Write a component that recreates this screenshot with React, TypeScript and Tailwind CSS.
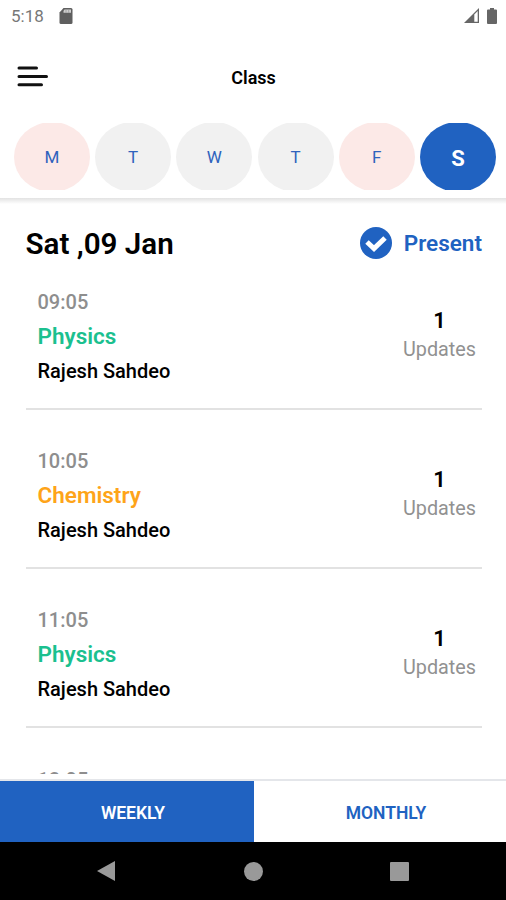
const days = [
  { label: "M", tone: "bg-[#fce9e7] text-[#2f62bd] text-[17px]" },
  { label: "T", tone: "bg-[#f1f1f1] text-[#2f62bd] text-[17px]" },
  { label: "W", tone: "bg-[#f1f1f1] text-[#2f62bd] text-[17px]" },
  { label: "T", tone: "bg-[#f1f1f1] text-[#2f62bd] text-[17px]" },
  { label: "F", tone: "bg-[#fce9e7] text-[#2f62bd] text-[17px]" },
  { label: "S", tone: "bg-[#2062c1] text-white text-[22px] font-bold" },
];

const lessons = [
  { time: "09:05", subject: "Physics", tone: "text-[#1bc08f]" },
  { time: "10:05", subject: "Chemistry", tone: "text-[#fea419]" },
  { time: "11:05", subject: "Physics", tone: "text-[#1bc08f]" },
];

function StatusBar() {
  return (
    <div className="flex h-8 shrink-0 items-center pl-[11px] pr-[9px] text-[#666]">
      <span className="w-[48px] text-[17px] leading-8 text-[#777]">5:18</span>
      <svg width="14" height="16" viewBox="0 0 14 16" className="mt-[-1px]">
        <path d="M4.500 0h7.500a1.500 1.500 0 0 1 1.500 1.500v13a1.500 1.500 0 0 1-1.500 1.500H2A1.500 1.500 0 0 1 .5 14.500V4.500z" fill="#5f5f5f" />
        <path d="M5.500 1.500h6.500v3.300H4.500V3z" fill="#d0d0d0" />
        <path d="M7 1.500v3.300M9.700 1.500v3.300" stroke="#999" strokeWidth=".8" />
      </svg>
      <svg width="15" height="15" viewBox="0 0 15 15" className="ml-auto mt-[-1px]">
        <path d="M0 15 15 0v15z" fill="#666" />
        <path d="M10.300 6.500 13.700 3v10.700h-3.400z" fill="#fff" />
      </svg>
      <svg width="10" height="16" viewBox="0 0 10 16" className="ml-[8px] mt-[-1px]">
        <path d="M3 0h4v1.500h2a1 1 0 0 1 1 1V15a1 1 0 0 1-1 1H1a1 1 0 0 1-1-1V2.500a1 1 0 0 1 1-1h2z" fill="#666" />
      </svg>
    </div>
  );
}

export default function App() {
  return (
    <div className="flex h-[900px] w-[506px] flex-col overflow-hidden bg-white font-['Roboto',sans-serif] text-black">
      <StatusBar />
      <header className="grid h-[91px] shrink-0 grid-cols-[1fr_auto_1fr] items-center pl-[17px] pr-[16px]">
        <svg width="32" height="22" viewBox="0 0 32 22" className="mt-[-2px]" stroke="#111" strokeWidth="3" strokeLinecap="round">
          <path d="M2 2h17.500M2 10.500h27.500M2 18.700h22.500" />
        </svg>
        <h1 className="text-[18px] font-semibold leading-6">Class</h1>
      </header>
      <nav className="flex h-[75px] shrink-0 gap-[5.200px] pl-[14px]">
        {days.map((d, i) => (
          <button key={i} className="flex h-[67px] w-[76px] shrink-0 items-center overflow-hidden">
            <span className={`flex h-[70px] w-[76px] shrink-0 items-center justify-center rounded-[50%] pt-[3px] ${d.tone}`}>
              {d.label}
            </span>
          </button>
        ))}
      </nav>
      <div className="h-[6px] shrink-0 bg-linear-to-b from-[#e2e2e2] to-white" />
      <main className="h-[570px] shrink-0 overflow-hidden pl-[25.500px] pr-[24px]">
        <div className="flex h-[80px] items-center justify-between">
          <h2 className="text-[29.600px] font-semibold leading-9">Sat ,09 Jan</h2>
          <div className="mt-[-3px] flex items-center gap-[12px] text-[22.500px] font-semibold text-[#2062c1]">
            <svg width="32" height="32" viewBox="0 0 32 32">
              <circle cx="16" cy="16" r="16" fill="#2062c1" />
              <path d="m7 15 7 6.500L25 11" fill="none" stroke="#fff" strokeWidth="5" />
            </svg>
            <span className="mt-[2px]">Present</span>
          </div>
        </div>
        {lessons.map((l) => (
          <article key={l.time} className="flex h-[159px] flex-col justify-between pb-[33px]">
            <div className="flex justify-between pl-[12px] pr-[6px]">
              <div className="flex flex-col font-medium leading-[35px]">
                <span className="relative top-px text-[20px] text-[#8e8e8e]">{l.time}</span>
                <span className={`text-[22.500px] font-semibold ${l.tone}`}>{l.subject}</span>
                <span className="text-[20px]">Rajesh Sahdeo</span>
              </div>
              <div className="flex flex-col items-center pt-[22px] leading-[29px]">
                <span className="text-[22px] font-semibold">1</span>
                <span className="text-[19.800px] text-[#919191]">Updates</span>
              </div>
            </div>
            <div className="h-[2px] bg-[#e2e2e2]" />
          </article>
        ))}
        <div className="pl-[12px] pt-[2px] text-[20px] font-medium leading-[35px] text-[#8e8e8e]">12:05</div>
      </main>
      <div className="h-[5px] shrink-0" />
      <div className="h-[2px] shrink-0 bg-[#e4e6ea]" />
      <div className="flex h-[61px] shrink-0 text-[17.500px] font-semibold">
        <button className="w-[254px] bg-[#2062c1] pl-[12px] pt-[3px] text-white">WEEKLY</button>
        <button className="flex-1 pl-[12px] pt-[3px] text-[#2062c1]">MONTHLY</button>
      </div>
      <div className="flex flex-1 items-center bg-black pl-[97px]">
        <svg width="18" height="20" viewBox="0 0 18 20"><path d="M0 10 18 0v20z" fill="#999" /></svg>
        <span className="ml-[129px] size-[19px] rounded-full bg-[#999]" />
        <span className="ml-[127px] size-[19px] rounded-[1px] bg-[#999]" />
      </div>
    </div>
  );
}
